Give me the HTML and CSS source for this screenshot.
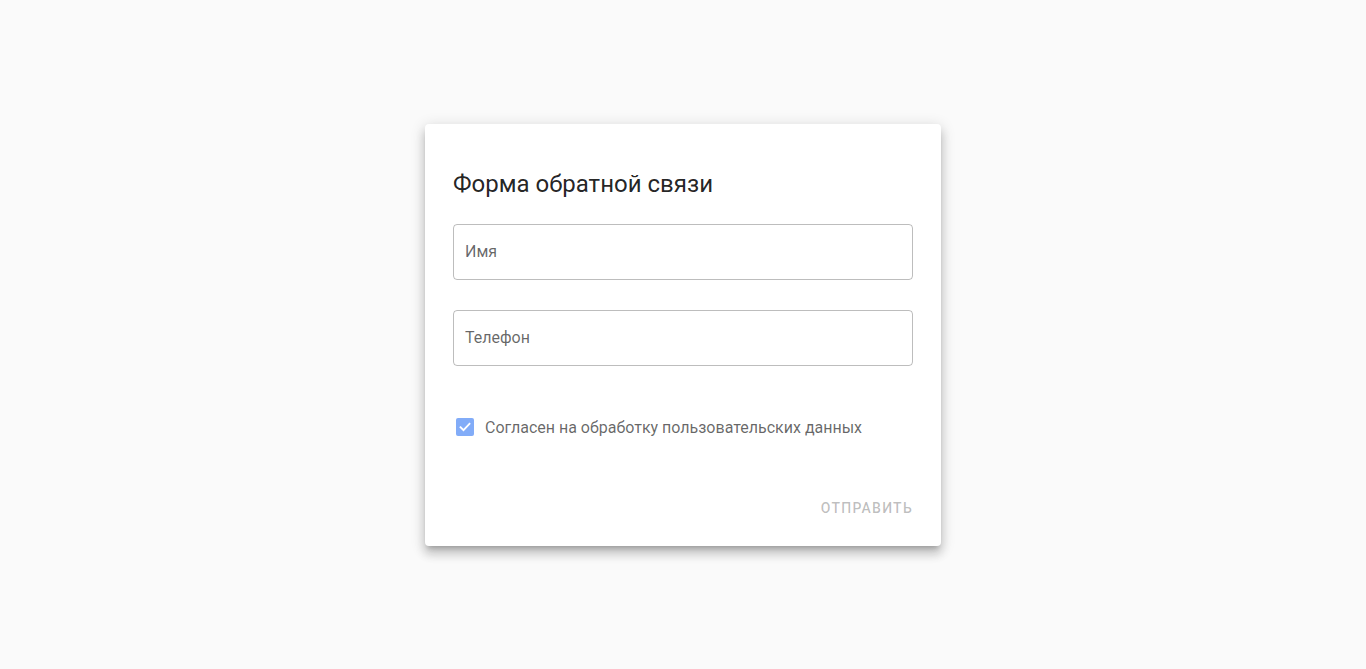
FILE: index.html
```html
<!DOCTYPE html>
<html lang="ru">
<head>
<meta charset="utf-8">
<title>Форма обратной связи</title>
<link rel="stylesheet" href="styles.css">
</head>
<body>
<main class="page">
  <form class="card">
    <h1 class="title">Форма обратной связи</h1>
    <div class="field"><span class="field-label">Имя</span></div>
    <div class="field"><span class="field-label">Телефон</span></div>
    <label class="check">
      <span class="check-box">
        <svg viewBox="0 0 24 24" width="18" height="18"><path d="M6 12.2l4 4 8-8.4" fill="none" stroke="#fff" stroke-width="2.4" stroke-linecap="square"/></svg>
      </span>
      <span class="check-text">Согласен на обработку пользовательских данных</span>
    </label>
    <div class="actions"><span class="btn">Отправить</span></div>
  </form>
</main>
</body>
</html>
```
FILE: styles.css
```css
html, body { margin: 0; padding: 0; }
body {
  background: #fafafa;
  font-family: Roboto, "Noto Sans", sans-serif;
  height: 669px;
}
.page {
  display: flex;
  justify-content: center;
  padding-top: 124px;
}
.card {
  width: 460px;
  padding: 44px 28px 20px;
  background: #fff;
  border-radius: 4px;
  box-shadow: 0 5px 5px -3px rgba(0,0,0,.2), 0 8px 10px 1px rgba(0,0,0,.14), 0 3px 14px 2px rgba(0,0,0,.12);
  display: flex;
  flex-direction: column;
}
.title {
  margin: 0 0 24px;
  font-size: 24px;
  line-height: 32px;
  font-weight: 400;
  color: rgba(0,0,0,.87);
}
.field {
  height: 54px;
  border: 1px solid rgba(0,0,0,.26);
  border-radius: 4px;
  display: flex;
  align-items: center;
  padding: 0 11px 2px;
  box-sizing: content-box;
  margin-bottom: 30px;
}
.field { height: 52px; }
.field + .field { margin-bottom: 49px; }
.field-label {
  font-size: 16px;
  color: rgba(0,0,0,.6);
}
.check {
  display: flex;
  align-items: center;
  height: 24px;
  padding-left: 3px;
}
.check-box {
  width: 18px;
  height: 18px;
  border-radius: 2px;
  background: #82acf8;
  display: flex;
}
.check-text {
  margin-left: 11px;
  font-size: 16px;
  color: rgba(0,0,0,.6);
}
.actions {
  margin-top: 51px;
  display: flex;
  justify-content: flex-end;
}
.btn {
  height: 36px;
  line-height: 36px;
  font-size: 14px;
  font-weight: 500;
  letter-spacing: 1.25px;
  text-transform: uppercase;
  color: rgba(0,0,0,.26);
}
```
